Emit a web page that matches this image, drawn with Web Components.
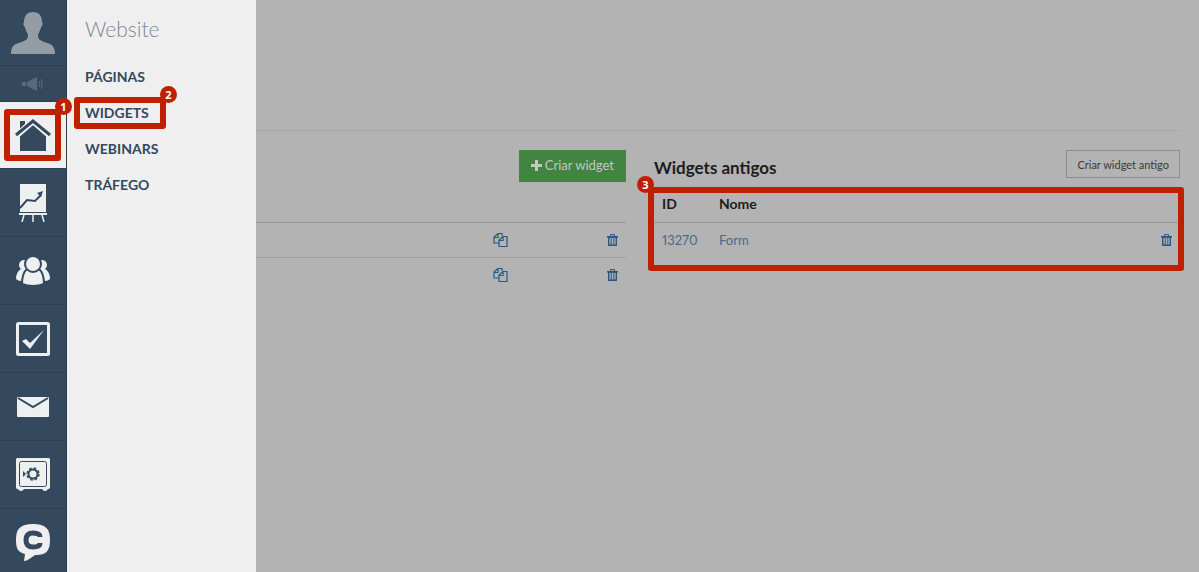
<!DOCTYPE html>
<html lang="pt-BR">
<head>
<meta charset="utf-8">
<meta name="viewport" content="width=device-width, initial-scale=1">
<title>Widgets</title>
<style>
  body {
    margin: 0;
    background: #b3b3b3;
    color: #1c1c1c;
    font-family: Lato, "Liberation Sans", sans-serif;
    font-size: 14px;
    line-height: 20px;
  }
</style>
</head>
<body>
<app-shell>
  <side-nav slot="nav"></side-nav>
  <side-panel slot="panel" heading="Website">
    <panel-link>PÁGINAS</panel-link>
    <panel-link step="2">WIDGETS</panel-link>
    <panel-link>WEBINARS</panel-link>
    <panel-link>TRÁFEGO</panel-link>
  </side-panel>
  <widgets-page></widgets-page>
</app-shell>

<script>
const ICONS = {
  user: ['0 0 44 44', `<path fill="#959da4" d="M22 1c6 0 9 4 9 10 1 1 1 4-1 5-1 5-3 6-3 9 0 4 4 5 9 7 5 1 8 4 8 11H0c0-7 3-10 8-11 5-2 9-3 9-7 0-3-2-4-3-9-2-1-2-4-1-5 0-6 3-10 9-10z"/>`],
  horn: ['0 0 22 14', `<g fill="#576b7f"><path d="M5 5l10-5v14L5 9z"/><rect y="5" width="4" height="4"/></g><path d="M17 4q2 3 0 6M19 2q3 5 0 10" fill="none" stroke="#576b7f"/>`],
  home: ['0 0 36 32', `<path fill="#34495e" d="M5 2h5v3L5 10zM18 6l13 11v15H5V17z"/><path d="M1 17L18 2l17 15" fill="none" stroke="#efefef" stroke-width="6"/><path d="M1 16L18 2l17 14" fill="none" stroke="#34495e" stroke-width="3"/>`],
  chart: ['0 0 28 38', `<path fill="#ecf0f1" d="M1 0h26v28H1zM0 29h28v2H0z"/><path d="M5 31l-2 7M14 31v7M23 31l2 7" stroke="#ecf0f1" stroke-width="1.5"/><path d="M1 24l7-8 8 1 6-6" fill="none" stroke="#34495e" stroke-width="2"/><path d="M18 9l6-2-2 6z" fill="#34495e"/>`],
  people: ['0 0 34 30', `<g fill="#ecf0f1"><circle cx="8" cy="9" r="5"/><circle cx="26" cy="9" r="5"/><path d="M5 13h6v12H5q-3 0-5-2 0-7 5-10zM29 13h-6v12h6q3 0 5-2 0-7-5-10z"/></g><path d="M11 13Q6 17 6 28q11 4 22 0 0-11-5-15z" fill="#ecf0f1" stroke="#34495e" stroke-width="2"/><circle cx="17" cy="8" r="8" fill="#ecf0f1" stroke="#34495e" stroke-width="2"/>`],
  check: ['0 0 34 34', `<rect x="1.5" y="1.5" width="31" height="31" rx="1" fill="none" stroke="#ecf0f1" stroke-width="3"/><path d="M6 19l4-2 4 4L28 8 14 27z" fill="#ecf0f1"/>`],
  mail: ['0 0 32 20', `<rect width="32" height="20" rx="1" fill="#ecf0f1"/><path d="M1 1l15 9L31 1" fill="none" stroke="#34495e" stroke-width="2"/>`],
  safe: ['0 0 34 34', `<path d="M1 0h32l1 1v29l-1 1h-1q-1 2-3 2t-3-2H8q-1 2-3 2t-3-2H1l-1-1V1z" fill="#ecf0f1"/><rect x="3.5" y="3.5" width="27" height="25" rx="2" fill="none" stroke="#34495e"/><circle cx="17" cy="16" r="4.5" fill="none" stroke="#34495e" stroke-width="2"/><circle cx="17" cy="16" r="6" fill="none" stroke="#34495e" stroke-width="1.4" stroke-dasharray="2.7 2"/><path d="M7 13l3 3-3 3z" fill="#34495e"/>`],
  chat: ['0 0 34 37', `<path d="M17 0c13 0 17 5 17 16S30 31 20 31c-3 0-7 6-12 6l1-7C2 28 0 25 0 16 0 5 4 0 17 0z" fill="#efefef"/><path d="M24 13q0-4-7-4-7 0-7 7t7 7q7 0 7-4" fill="none" stroke="#34495e" stroke-width="5"/>`],
  plus: ['0 0 11 11', `<path d="M4 0h3v4h4v3H7v4H4V7H0V4h4z" fill="currentColor"/>`],
  copy: ['0 0 15 14', `<path d="M6 10H1V4l4-3.5h4V3M1 4.5h4V1M6 7l4-3.5h4v10H6zM6 7.5h4V4" fill="none" stroke="currentColor" stroke-width="1.2"/>`],
  trash: ['0 0 11 12', `<path d="M0 2h11v1.6H0z" fill="currentColor"/><path d="M3.5 2V.6h4V2" fill="none" stroke="currentColor"/><path d="M1.7 3h7.6v8.2H1.7z" fill="none" stroke="currentColor" stroke-width="1.4"/><path d="M4.2 4v7M6.8 4v7" stroke="currentColor"/>`]
};

class AppIcon extends HTMLElement {
  connectedCallback() {
    const [box, shapes] = ICONS[this.getAttribute('name')];
    const [, , width, height] = box.split(' ');
    this.attachShadow({ mode: 'open' });
    this.shadowRoot.innerHTML = `
      <style>
        :host { display: inline-block; }
        svg { display: block; }
      </style>
      <svg viewBox="${box}" width="${width}" height="${height}" aria-hidden="true">${shapes}</svg>
    `;
  }
}

// Red numbered frame, laid over its positioned parent
class StepMark extends HTMLElement {
  connectedCallback() {
    this.attachShadow({ mode: 'open' });
    this.shadowRoot.innerHTML = `
      <style>
        :host {
          position: absolute;
          box-sizing: border-box;
          border: 6px solid #bf2000;
          border-radius: 3px;
          pointer-events: none;
          z-index: 2;
        }
        span {
          position: absolute;
          top: -17px;
          width: 17px;
          height: 17px;
          border-radius: 50%;
          background: #bf2000;
          color: #fff;
          font: bold 11px/17px "Noto Sans", sans-serif;
          text-align: center;
        }
        :host([side="right"]) span { right: -17px; }
        :host([side="left"]) span { left: -17px; }
      </style>
      <span>${this.getAttribute('step')}</span>
    `;
  }
}

class AppShell extends HTMLElement {
  connectedCallback() {
    this.attachShadow({ mode: 'open' });
    this.shadowRoot.innerHTML = `
      <style>
        :host {
          display: flex;
          height: 100vh;
          overflow: hidden;
        }
        main {
          flex: 1;
          min-width: 0;
        }
      </style>
      <slot name="nav"></slot>
      <slot name="panel"></slot>
      <main><slot></slot></main>
    `;
  }
}

class SideNav extends HTMLElement {
  connectedCallback() {
    this.attachShadow({ mode: 'open' });
    this.shadowRoot.innerHTML = `
      <style>
        :host {
          display: block;
          flex: none;
          width: 66px;
          background: #34495e;
          border-right: 1px solid #2c3e50;
          z-index: 1;
        }
        nav {
          display: flex;
          flex-direction: column;
        }
        a {
          position: relative;
          display: flex;
          align-items: center;
          justify-content: center;
          box-sizing: border-box;
          height: 68px;
          border-bottom: 1px solid #2c3e50;
        }
        a.profile { height: 66px; }
        a.short { height: 36px; }
        a.active {
          height: 67px;
          background: #efefef;
        }
        step-mark {
          inset: 7px 5px 7px 4px;
        }
      </style>
      <nav aria-label="Principal">
        <a href="#perfil" aria-label="Perfil" class="profile"><app-icon name="user"></app-icon></a>
        <a href="#novidades" aria-label="Novidades" class="short"><app-icon name="horn"></app-icon></a>
        <a href="#website" aria-label="Website" class="active">
          <app-icon name="home"></app-icon>
          <step-mark step="1" side="right"></step-mark>
        </a>
        <a href="#relatorios" aria-label="Relatórios"><app-icon name="chart"></app-icon></a>
        <a href="#contatos" aria-label="Contatos"><app-icon name="people"></app-icon></a>
        <a href="#tarefas" aria-label="Tarefas"><app-icon name="check"></app-icon></a>
        <a href="#email" aria-label="Email"><app-icon name="mail"></app-icon></a>
        <a href="#vendas" aria-label="Vendas"><app-icon name="safe"></app-icon></a>
        <a href="#chat" aria-label="Chat"><app-icon name="chat"></app-icon></a>
      </nav>
    `;
  }
}

class SidePanel extends HTMLElement {
  connectedCallback() {
    this.attachShadow({ mode: 'open' });
    this.shadowRoot.innerHTML = `
      <style>
        :host {
          display: block;
          flex: none;
          box-sizing: border-box;
          width: 189px;
          padding: 16px 18px;
          background: #efefef;
        }
        h2 {
          margin: 0 0 24px;
          color: #7b8798;
          font-size: 21px;
          font-weight: 300;
          line-height: 26px;
        }
        nav {
          display: flex;
          flex-direction: column;
          align-items: flex-start;
          gap: 14px;
        }
      </style>
      <h2>${this.getAttribute('heading')}</h2>
      <nav aria-label="${this.getAttribute('heading')}"><slot></slot></nav>
    `;
  }
}

class PanelLink extends HTMLElement {
  connectedCallback() {
    const step = this.getAttribute('step');
    this.attachShadow({ mode: 'open' });
    this.shadowRoot.innerHTML = `
      <style>
        :host {
          display: block;
          position: relative;
        }
        a {
          display: block;
          color: #34495e;
          font-size: 14px;
          font-weight: 700;
          line-height: 22px;
          text-decoration: none;
        }
        step-mark { inset: -5px -17px -5px -11px; }
      </style>
      <a href="#"><slot></slot></a>
      ${step ? `<step-mark step="${step}" side="right"></step-mark>` : ''}
    `;
  }
}

class WidgetsPage extends HTMLElement {
  connectedCallback() {
    this.attachShadow({ mode: 'open' });
    this.shadowRoot.innerHTML = `
      <style>
        :host {
          display: block;
          padding-right: 19px;
        }
        header {
          height: 130px;
          border-bottom: 1px solid #a8a8a8;
        }
        .columns {
          display: flex;
          gap: 28px;
          padding-top: 19px;
        }
        .current { flex: 370; min-width: 0; }
        .old { flex: 526; min-width: 0; }
        .bar {
          display: flex;
          align-items: flex-start;
          justify-content: space-between;
          height: 37px;
        }
        .current .bar { justify-content: flex-end; }
        h3 {
          margin: 6px 0 0;
          font-size: 17px;
          font-weight: 700;
          line-height: 24px;
        }
        button {
          font-family: inherit;
          cursor: pointer;
        }
        .primary {
          display: flex;
          align-items: center;
          gap: 3px;
          height: 32px;
          padding: 0 12px 2px;
          border: 0;
          background: #418541;
          color: #c0c8c0;
          font-size: 13px;
        }
        .plain {
          height: 28px;
          padding: 0 10px;
          border: 1px solid #8e8e8e;
          background: transparent;
          color: #3a3a3a;
          font-size: 11px;
        }
        .icon {
          display: inline-flex;
          padding: 0 0 2px;
          border: 0;
          background: none;
          color: #285882;
          vertical-align: middle;
        }
        .table { position: relative; }
        table {
          width: 100%;
          table-layout: fixed;
          border-collapse: collapse;
        }
        th, td {
          box-sizing: border-box;
          height: 35px;
          padding: 0 8px;
          font-size: 14px;
          text-align: left;
        }
        td { font-size: 13px; }
        thead { border-bottom: 1px solid #959595; }
        tbody tr + tr { border-top: 1px solid #a0a0a0; }
        .id { width: 57px; }
        .act { width: 101px; }
        .del { width: 40px; }
        td:last-child { text-align: right; }
        td a {
          color: #446a90;
          font-variant-numeric: proportional-nums;
          text-decoration: none;
        }
        step-mark { inset: 0 -4px -14px -6px; }
      </style>
      <header></header>
      <div class="columns">
        <section class="current" aria-label="Widgets">
          <div class="bar">
            <button class="primary"><app-icon name="plus"></app-icon>Criar widget</button>
          </div>
          <table aria-label="Widgets">
            <colgroup><col><col class="act"><col class="del"></colgroup>
            <thead><tr><th></th><th></th><th></th></tr></thead>
            <tbody>
              <tr>
                <td></td>
                <td><button class="icon" aria-label="Copiar"><app-icon name="copy"></app-icon></button></td>
                <td><button class="icon" aria-label="Excluir"><app-icon name="trash"></app-icon></button></td>
              </tr>
              <tr>
                <td></td>
                <td><button class="icon" aria-label="Copiar"><app-icon name="copy"></app-icon></button></td>
                <td><button class="icon" aria-label="Excluir"><app-icon name="trash"></app-icon></button></td>
              </tr>
            </tbody>
          </table>
        </section>
        <section class="old" aria-labelledby="old-title">
          <div class="bar">
            <h3 id="old-title">Widgets antigos</h3>
            <button class="plain">Criar widget antigo</button>
          </div>
          <div class="table">
            <table aria-labelledby="old-title">
              <colgroup><col class="id"><col><col class="del"></colgroup>
              <thead><tr><th>ID</th><th>Nome</th><th></th></tr></thead>
              <tbody>
                <tr>
                  <td><a href="#13270">13270</a></td>
                  <td><a href="#13270">Form</a></td>
                  <td><button class="icon" aria-label="Excluir"><app-icon name="trash"></app-icon></button></td>
                </tr>
              </tbody>
            </table>
            <step-mark step="3" side="left"></step-mark>
          </div>
        </section>
      </div>
    `;
  }
}

customElements.define('app-icon', AppIcon);
customElements.define('step-mark', StepMark);
customElements.define('app-shell', AppShell);
customElements.define('side-nav', SideNav);
customElements.define('side-panel', SidePanel);
customElements.define('panel-link', PanelLink);
customElements.define('widgets-page', WidgetsPage);
</script>
</body>
</html>
